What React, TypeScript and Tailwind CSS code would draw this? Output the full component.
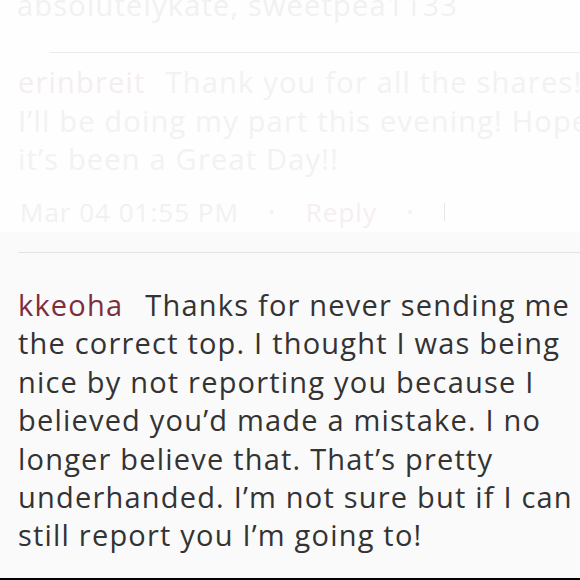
const lines = [
  "the correct top. I thought I was being",
  "nice by not reporting you because I",
  "believed you’d made a mistake. I no",
  "longer believe that. That’s pretty",
  "underhanded. I’m not sure but if I can",
  "still report you I’m going to!",
];

export default function App() {
  const font = { fontFamily: "'Open Sans', sans-serif" };
  return (
    <div className="relative h-[580px] w-[580px] overflow-hidden bg-[#fafafa]" style={font}>
      {/* faded previous comment */}
      <div className="flow-root h-[232px] bg-[#fefefe]">
        <div className="-mt-[14px] h-[38px] whitespace-nowrap pl-[17px] text-[29px] leading-[38px] tracking-[1.2px] text-[#f1f1f1]">absolutelykate, sweetpea1133</div>
        <div className="ml-[50px] mt-[28px] h-px bg-[#ede9ea]" />
        <div className="whitespace-nowrap pl-[18px] pt-[10px] text-[29px] leading-[38.5px] tracking-[1.2px] text-[#f2f2f2]">
          <div>
            <span className="mr-[20px] text-[#f5eeef]">erinbreit</span>Thank you for all the shares!!
          </div>
          <div>I’ll be doing my part this evening! Hope</div>
          <div>it’s been a Great Day!!</div>
        </div>
        <div className="flex items-center gap-[30px] whitespace-nowrap pl-[20px] pt-[16px] text-[26px] leading-[34px] tracking-[1px] text-[#f1f1f1]">
          <span>Mar 04 01:55 PM</span>
          <span className="text-[16px]">•</span>
          <span className="text-[#f6eef0]">Reply</span>
          <span className="text-[16px]">•</span>
          <span className="h-[18px] w-[22px] border-l border-[#e6e6e6]" />
        </div>
      </div>
      <div className="ml-[18px] mt-[20px] h-px bg-[#e3e3e5]" />
      <div className="whitespace-nowrap pl-[18px] pt-[33px] text-[29px] leading-[38.4px] tracking-[1.2px] text-[#333333]">
        <div>
          <span className="mr-[22px] text-[#7d2e3c]">kkeoha</span>Thanks for never sending me
        </div>
        {lines.map((l) => (
          <div key={l}>{l}</div>
        ))}
      </div>
      <div className="absolute bottom-0 left-0 h-[2px] w-full bg-black" />
    </div>
  );
}
